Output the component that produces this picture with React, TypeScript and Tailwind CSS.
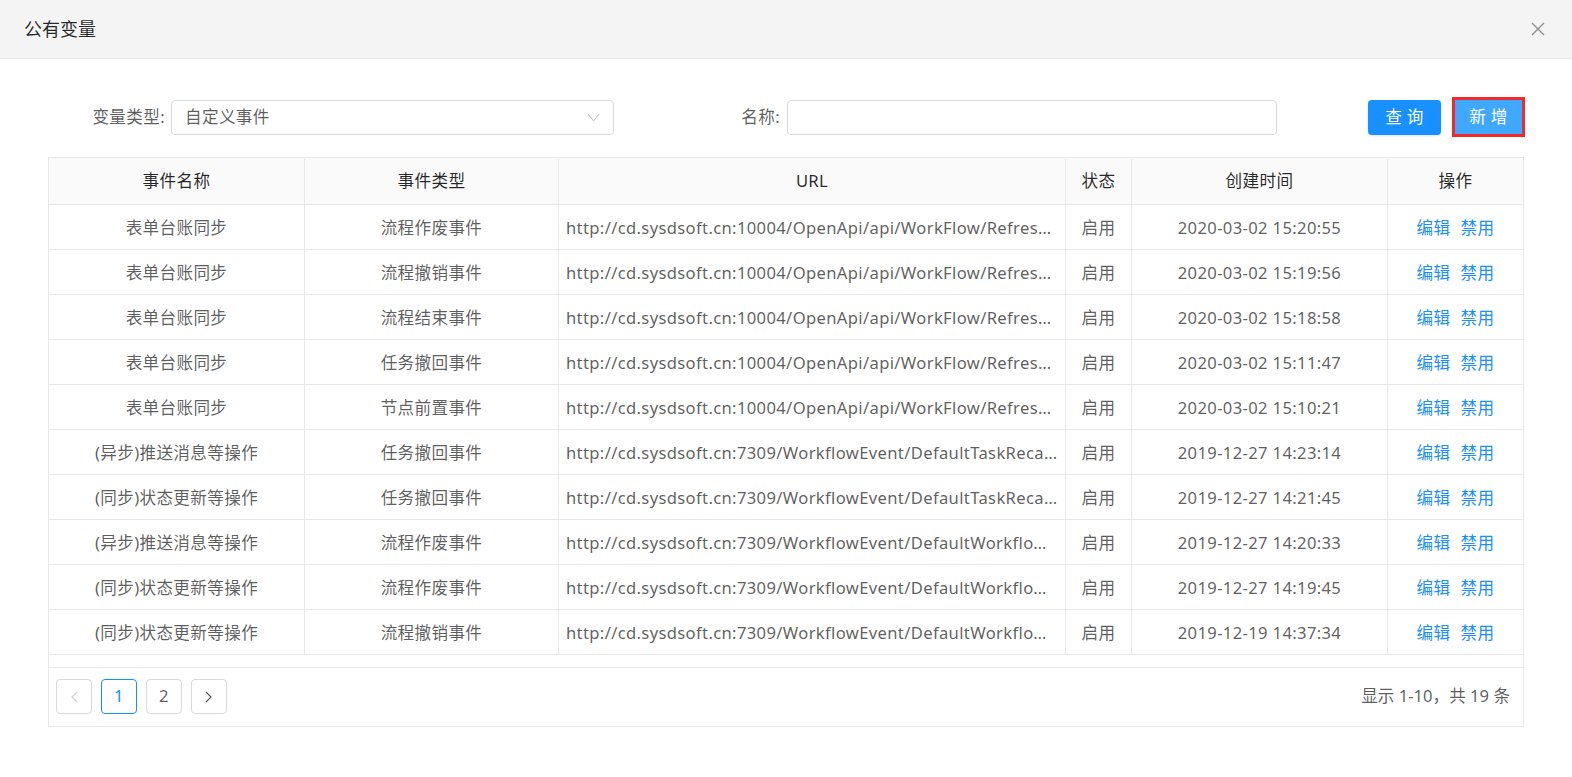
import React from "react";

type Row = {
  name: string;
  type: string;
  url: string;
  status: string;
  time: string;
};

const rows: Row[] = [
  { name: "表单台账同步", type: "流程作废事件", url: "http://cd.sysdsoft.cn:10004/OpenApi/api/WorkFlow/RefreshFormLedger", status: "启用", time: "2020-03-02 15:20:55" },
  { name: "表单台账同步", type: "流程撤销事件", url: "http://cd.sysdsoft.cn:10004/OpenApi/api/WorkFlow/RefreshFormLedger", status: "启用", time: "2020-03-02 15:19:56" },
  { name: "表单台账同步", type: "流程结束事件", url: "http://cd.sysdsoft.cn:10004/OpenApi/api/WorkFlow/RefreshFormLedger", status: "启用", time: "2020-03-02 15:18:58" },
  { name: "表单台账同步", type: "任务撤回事件", url: "http://cd.sysdsoft.cn:10004/OpenApi/api/WorkFlow/RefreshFormLedger", status: "启用", time: "2020-03-02 15:11:47" },
  { name: "表单台账同步", type: "节点前置事件", url: "http://cd.sysdsoft.cn:10004/OpenApi/api/WorkFlow/RefreshFormLedger", status: "启用", time: "2020-03-02 15:10:21" },
  { name: "(异步)推送消息等操作", type: "任务撤回事件", url: "http://cd.sysdsoft.cn:7309/WorkflowEvent/DefaultTaskRecallAsync", status: "启用", time: "2019-12-27 14:23:14" },
  { name: "(同步)状态更新等操作", type: "任务撤回事件", url: "http://cd.sysdsoft.cn:7309/WorkflowEvent/DefaultTaskRecallSync", status: "启用", time: "2019-12-27 14:21:45" },
  { name: "(异步)推送消息等操作", type: "流程作废事件", url: "http://cd.sysdsoft.cn:7309/WorkflowEvent/DefaultWorkflowCancelAsync", status: "启用", time: "2019-12-27 14:20:33" },
  { name: "(同步)状态更新等操作", type: "流程作废事件", url: "http://cd.sysdsoft.cn:7309/WorkflowEvent/DefaultWorkflowCancelSync", status: "启用", time: "2019-12-27 14:19:45" },
  { name: "(同步)状态更新等操作", type: "流程撤销事件", url: "http://cd.sysdsoft.cn:7309/WorkflowEvent/DefaultWorkflowRevokeSync", status: "启用", time: "2019-12-19 14:37:34" },
];

const cols = "grid grid-cols-[256px_254px_507px_66px_256px_135px]";
const cell = "flex items-center justify-center border-r border-[#e8e8e8]";

const App = () => {
  return (
    <div className="min-h-screen w-full bg-white font-['Noto_Sans','Noto_Sans_CJK_SC',sans-serif] text-[16.6px] tracking-[0.35px] text-[rgba(0,0,0,0.65)]">
      {/* dialog header */}
      <div className="flex h-[59px] items-center justify-between border-b border-[#e8e8e8] bg-[#f4f4f4] pl-[24px] pr-[27px]">
        <span className="text-[18px] tracking-normal text-[rgba(0,0,0,0.85)]">公有变量</span>
        <svg width="14" height="14" viewBox="0 0 14 14" className="text-[#8c8c8c]">
          <path d="M1 1L13 13M13 1L1 13" stroke="currentColor" strokeWidth="1.3" fill="none" />
        </svg>
      </div>

      <div className="ml-[48px] w-[1476px]">
        {/* filters */}
        <div className="mt-[40px] flex h-[35px] items-center pt-[1px]">
          <label className="w-[117px] text-right">变量类型:</label>
          <div className="ml-[6px] flex h-[35px] w-[443px] items-center justify-between rounded-[4px] border border-[#d9d9d9] pl-[13px] pr-[13px]">
            <span>自定义事件</span>
            <svg width="13" height="9" viewBox="0 0 13 9">
              <path d="M1 1L6.5 8L12 1" stroke="#bfbfbf" strokeWidth="1" fill="none" />
            </svg>
          </div>
          <label className="w-[166px] text-right">名称:</label>
          <input className="ml-[7px] h-[35px] w-[490px] rounded-[4px] border border-[#d9d9d9] px-[11px] outline-none" />
          <div className="ml-auto flex items-center gap-[14px] pr-[2px]">
            <button className="h-[35px] w-[73px] rounded-[4px] bg-[#1890ff] text-white shadow-sm">查 询</button>
            <button className="h-[34px] w-[67px] bg-[#40a9ff] text-white outline-3 outline-[#f02a2a]">新 增</button>
          </div>
        </div>

        {/* table */}
        <div className="mt-[23px] border border-[#e8e8e8]">
          <div className={`${cols} h-[47px] border-b border-[#e8e8e8] bg-[#fafafa] pt-[1px] text-[rgba(0,0,0,0.85)]`}>
            <div className={cell}>事件名称</div>
            <div className={cell}>事件类型</div>
            <div className={cell}>URL</div>
            <div className={cell}>状态</div>
            <div className={cell}>创建时间</div>
            <div className="flex items-center justify-center">操作</div>
          </div>
          {rows.map((r, i) => (
            <div key={i} className={`${cols} h-[45px] border-b border-[#e8e8e8]`}>
              <div className={`${cell} pt-[3px]`}>{r.name}</div>
              <div className={`${cell} pt-[3px]`}>{r.type}</div>
              <div className="flex min-w-0 items-center border-r border-[#e8e8e8] px-[7px] pt-[3px]">
                <span className="truncate">{r.url}</span>
              </div>
              <div className={`${cell} pt-[3px]`}>{r.status}</div>
              <div className={`${cell} pt-[3px]`}>{r.time}</div>
              <div className="flex items-center justify-center gap-[10px] pt-[3px] text-[#1890ff]">
                <a>编辑</a>
                <a>禁用</a>
              </div>
            </div>
          ))}
          <div className="h-[12px]" />

          {/* pagination */}
          <div className="flex items-center justify-between border-t border-[#e8e8e8] pb-[12px] pl-[7px] pr-[13px] pt-[11px]">
            <div className="flex items-center gap-[9px]">
              <button className="flex h-[35px] w-[36px] items-center justify-center rounded-[4px] border border-[#d9d9d9] text-[#d0d0d0]">
                <svg width="8" height="12" viewBox="0 0 8 12">
                  <path d="M7 1L2 6L7 11" stroke="currentColor" strokeWidth="1.2" fill="none" />
                </svg>
              </button>
              <button className="flex h-[35px] w-[36px] items-center justify-center rounded-[4px] border border-[#1890ff] text-[#1890ff]">1</button>
              <button className="flex h-[35px] w-[36px] items-center justify-center rounded-[4px] border border-[#d9d9d9]">2</button>
              <button className="flex h-[35px] w-[36px] items-center justify-center rounded-[4px] border border-[#d9d9d9] text-[#595959]">
                <svg width="8" height="12" viewBox="0 0 8 12">
                  <path d="M1 1L6 6L1 11" stroke="currentColor" strokeWidth="1.2" fill="none" />
                </svg>
              </button>
            </div>
            <span className="tracking-normal">显示 1-10，共 19 条</span>
          </div>
        </div>
      </div>
    </div>
  );
};

export default App;
